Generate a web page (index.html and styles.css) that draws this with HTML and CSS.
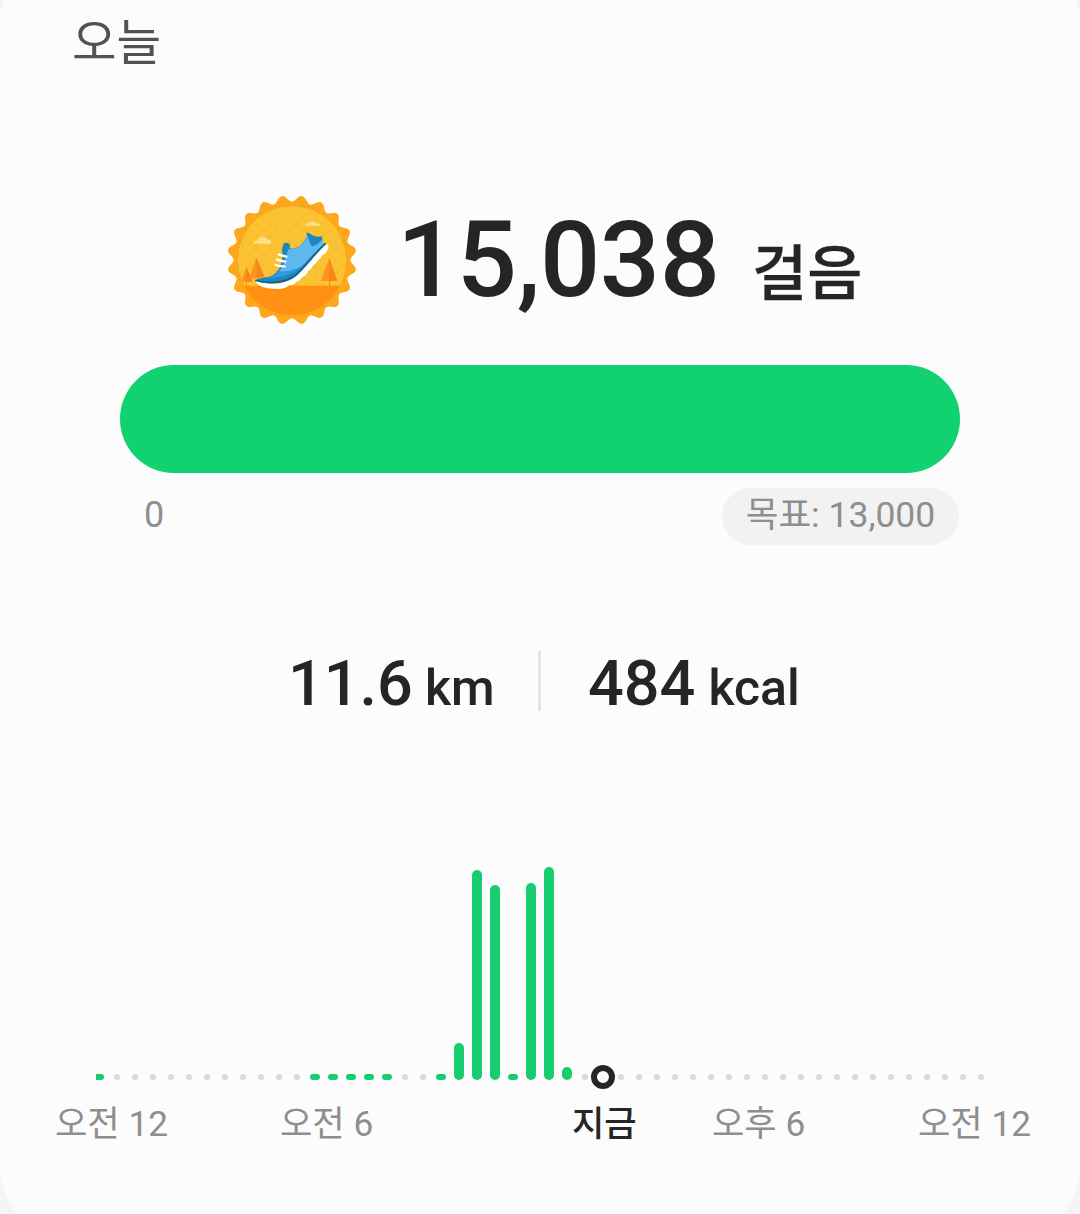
FILE: index.html
```html
<!DOCTYPE html>
<html lang="ko">
<head>
<meta charset="utf-8">
<title>걸음</title>
<link rel="stylesheet" href="styles.css">
</head>
<body>
<main class="card">
  <h1 class="day">오늘</h1>
  <section class="steps">
    <svg class="badge" viewBox="22 15 390 390" aria-hidden="true">
      <defs>
        <path id="tooth" d="M0 0L-27.4-172.8C-17-175-12-194 0-194S17-175 27.4-172.8Z"/>
        <pattern id="tri" width="40" height="36" patternUnits="userSpaceOnUse"><path d="M0 18L10 0L20 18ZM20 36L30 18L40 36Z" fill="#f4b51f" opacity=".3"/></pattern>
        <clipPath id="disc"><circle cx="217" cy="211" r="164"/></clipPath>
        <g id="five"><use href="#tooth" transform="rotate(9)"/><use href="#tooth" transform="rotate(27)"/><use href="#tooth" transform="rotate(45)"/><use href="#tooth" transform="rotate(63)"/><use href="#tooth" transform="rotate(81)"/></g>
      </defs>
      <g transform="translate(217 210)" fill="#fea71b">
        <circle r="173"/>
        <use href="#five"/><use href="#five" transform="rotate(90)"/><use href="#five" transform="rotate(180)"/><use href="#five" transform="rotate(270)"/>
      </g>
      <g clip-path="url(#disc)">
        <path fill="#fbc334" d="M40 40H400V290H40Z"/>
        <path fill="url(#tri)" d="M40 40H400V290H40Z"/>
        <path fill="#ff9012" d="M40 287H400V400H40Z"/>
      </g>
      <circle cx="217" cy="211" r="164" fill="none" stroke="#f59a12" stroke-width="2"/>
      <path fill="#fde08d" d="M104 161Q99 152 112 152Q118 140 128 142Q136 138 142 148Q156 149 153 161ZM257 107Q253 101 264 101Q270 92 279 95Q286 93 288 100Q303 101 300 107Z"/>
      <path fill="#fe9322" d="M110 204L134 258Q110 270 89 263ZM80 230L98 275H65ZM329 205L353 273H303Z"/>
      <path fill="#f4861c" d="M110 204L134 258L112 266ZM80 230L98 275H80ZM329 205L353 273H329Z"/>
      <path fill="#d97a1b" d="M79 272h2v15h-2zM328 270h2v17h-2z"/>
      <path fill="#fff" d="M108 273C111 288 139 297 173 297Q199 297 207 286Q222 286 229 276Q242 273 247 262Q260 257 264 245Q276 238 281 226Q291 221 295 211Q305 207 308 196Q324 187 327 167Q325 162 319 163C290 190 260 226 236 253Q215 274 174 281Q137 282 108 273Z"/>
      <path fill="#1f86bf" d="M106 271Q120 263 148 260Q170 254 181 231Q192 203 187 187Q187 167 194 159Q203 157 210 162L211 175C231 180 250 163 259 143L319 161C290 180 267 216 237 247Q216 269 178 278Q136 280 106 271Z"/>
      <path fill="#5fb7ef" d="M207 177Q231 181 249 160Q261 148 262 130L306 150L315 162C290 180 268 208 246 229Q232 241 214 243Q194 246 177 245Q193 227 198 204Q202 188 207 177Z"/>
      <path fill="#2f9bd8" d="M177 245Q207 247 240 232Q224 251 190 259Q164 265 140 264Q166 256 177 245Z"/>
      <path fill="#1f86bf" d="M260 129Q264 126 268 130Q286 143 307 139L308 150Q296 163 276 170Q268 153 260 129Z"/>
      <path fill="none" stroke="#0b5f92" stroke-width="5" d="M107 271C139 282 196 282 229 255C258 231 286 188 318 160"/>
      <path fill="none" stroke="#fff" stroke-width="7" stroke-linecap="round" d="M177 193Q188 197 200 200M172 209Q184 213 197 215M168 225Q181 230 195 229"/>
    </svg>
    <p class="count">15,038</p>
    <p class="unit">걸음</p>
  </section>
  <div class="progress"></div>
  <div class="range"><span class="zero">0</span><span class="goal">목표: 13,000</span></div>
  <section class="totals">
    <p class="distance"><span class="num">11.6</span><span class="measure">km</span></p>
    <p class="energy"><span class="num">484</span><span class="measure">kcal</span></p>
  </section>
  <div class="chart">
    <div class="bars">
      <i class="on"></i><i></i><i></i><i></i><i></i><i></i><i></i><i></i><i></i><i></i>
      <i></i><i></i><i class="on"></i><i class="on"></i><i class="on"></i><i class="on"></i><i class="on"></i><i></i><i></i><i class="on"></i>
      <i class="on" style="height:37px"></i><i class="on" style="height:210px"></i><i class="on" style="height:195px"></i><i class="on"></i><i class="on" style="height:197px"></i><i class="on" style="height:213px"></i><i class="on" style="height:13px"></i><i></i><i class="now"></i><i></i>
      <i></i><i></i><i></i><i></i><i></i><i></i><i></i><i></i><i></i><i></i>
      <i></i><i></i><i></i><i></i><i></i><i></i><i></i><i></i><i></i><i></i>
    </div>
  </div>
  <div class="hours">
    <span class="h0">오전 12</span><span class="h6">오전 6</span><span class="current">지금</span><span class="h18">오후 6</span><span class="h24">오전 12</span>
  </div>
</main>
</body>
</html>
```
FILE: styles.css
```css
* { box-sizing: border-box; }
body {
  margin: 0;
  height: 1214px;
  overflow: hidden;
  background: #f5f5f5;
  color: #252525;
  font-family: Roboto, "Noto Sans CJK KR", sans-serif;
}
p, h1 { margin: 0; }
.card {
  height: 1257px;
  margin-top: -14px;
  padding-top: 14px;
  border-radius: 30px 30px 78px 78px;
  background: #fcfcfc;
}
.day {
  height: 195px;
  padding: 8px 0 0 72px;
  font-size: 48.5px;
  font-weight: 400;
  line-height: 72px;
  color: #525252;
}
.steps {
  display: flex;
  height: 170px;
  padding-left: 227px;
}
.badge { width: 130px; height: 130px; flex: none; }
.count {
  width: 353px;
  padding-left: 40px;
  font-size: 106px;
  font-weight: 500;
  letter-spacing: -0.4px;
  line-height: 130px;
}
.unit {
  margin: 37px 0 0 42px;
  font-size: 60px;
  font-weight: 500;
  line-height: 86px;
  -webkit-text-stroke: 0.3px #252525;
}
.progress {
  height: 108px;
  margin: 0 120px;
  border-radius: 54px;
  background: #12d170;
}
.range {
  display: flex;
  justify-content: space-between;
  margin: 15px 121px 0 144px;
  height: 57px;
  font-size: 36px;
  line-height: 54px;
  color: #8e8e8e;
}
.goal {
  width: 237px;
  border-radius: 29px;
  background: #f2f2f2;
  font-size: 35.5px;
  line-height: 55px;
  text-align: center;
}
.totals {
  display: flex;
  height: 60px;
  margin-top: 106px;
  font-weight: 500;
  line-height: 66px;
}
.distance, .energy { display: flex; align-items: baseline; }
.distance {
  width: 541px;
  padding-left: 288px;
  border-right: 3px solid #e4e4e4;
}
.energy { padding-left: 47px; }
.num { font-size: 63px; }
.measure { margin-left: 13px; font-size: 50px; }
.distance .measure { margin-left: 12px; }
.chart {
  height: 240px;
  margin: 139px 0 0 96px;
  overflow: hidden;
}
.bars {
  display: flex;
  align-items: flex-end;
  height: 230px;
  margin-left: -6px;
}
.bars i {
  flex: none;
  width: 6px;
  height: 6px;
  margin: 0 6px;
  border-radius: 5px;
  background: #d9d9d9;
}
.bars .on {
  width: 10px;
  margin: 0 4px;
  border-radius: 5px;
  background: #18cd70;
}
.bars .now {
  width: 24px;
  height: 24px;
  margin: 0 -3px -9px;
  border: 6px solid #252525;
  border-radius: 50%;
  background: #fcfcfc;
}
.hours {
  display: flex;
  margin-top: 7px;
  padding-left: 55px;
  font-size: 35.2px;
  line-height: 54px;
  color: #8e8e8e;
  white-space: nowrap;
}
.h0 { width: 225px; }
.h6 { width: 292px; }
.current { width: 140px; color: #252525; font-weight: 500; }
.h18 { width: 206px; }
```
